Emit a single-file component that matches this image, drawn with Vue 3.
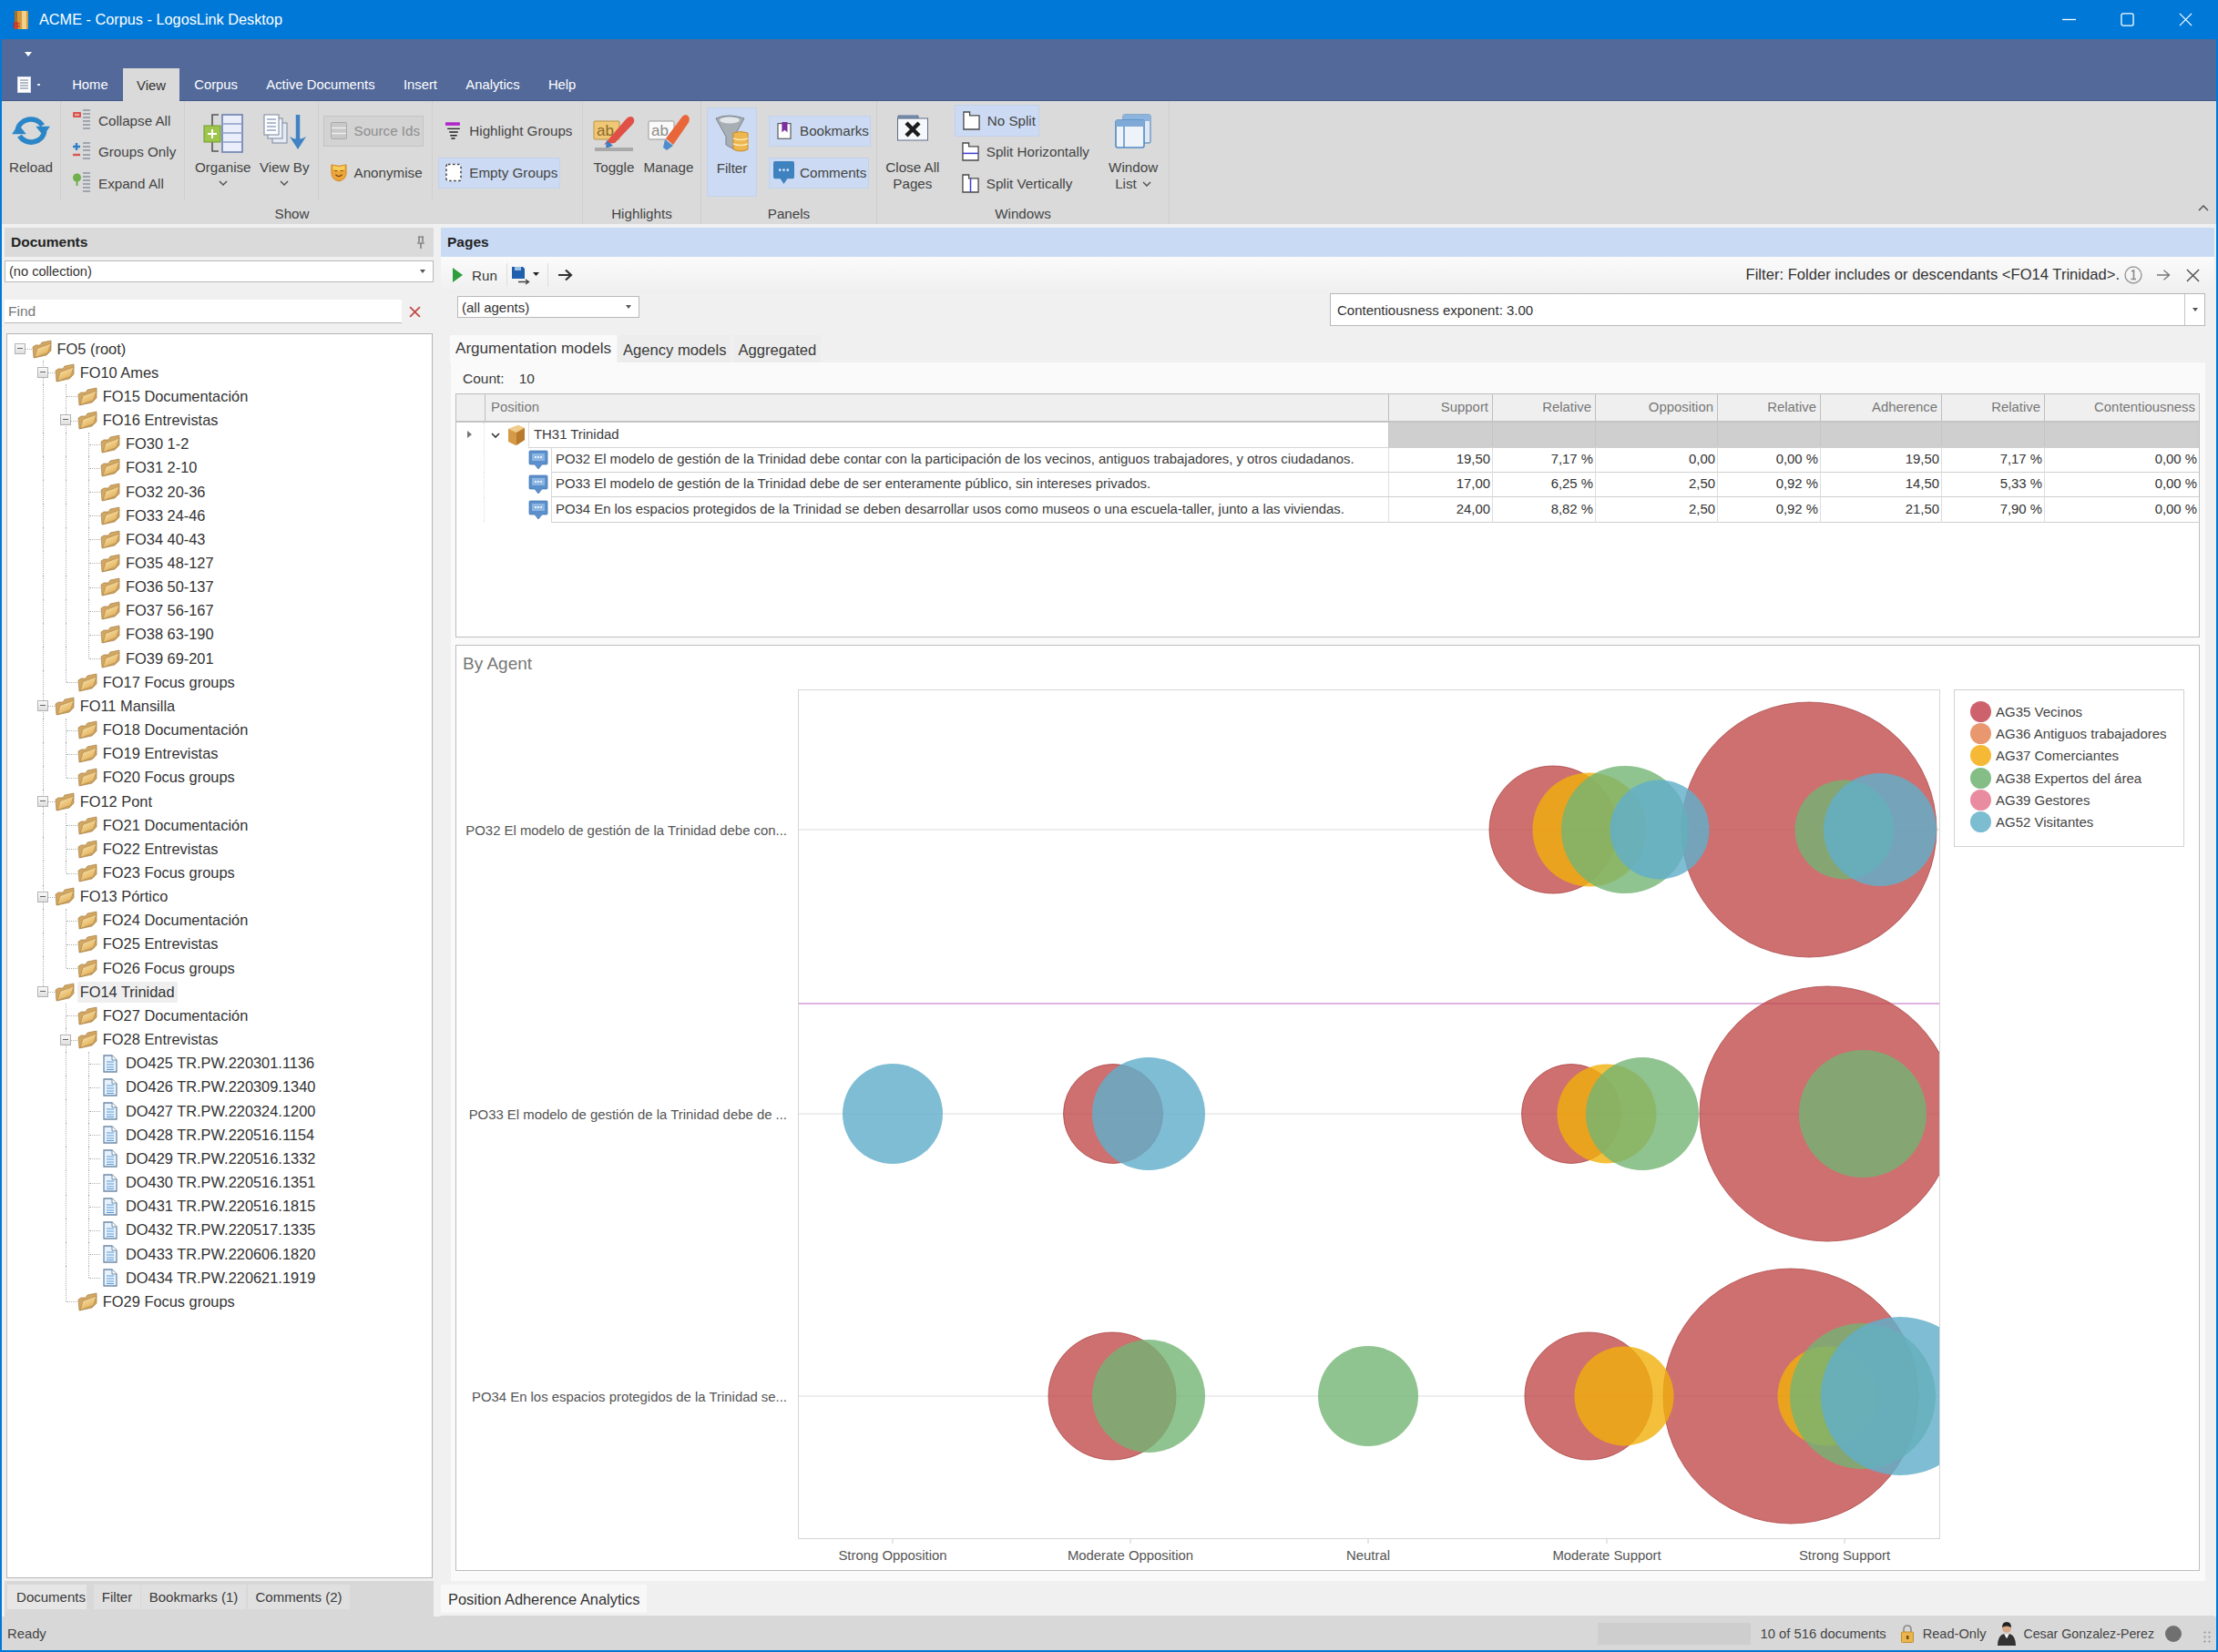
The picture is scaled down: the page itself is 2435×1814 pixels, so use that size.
<template>
  <div class="app">
    <svg class="sprite" aria-hidden="true">
      <defs>
        <linearGradient id="folderFront" x1="0" y1="0" x2="0.6" y2="1">
          <stop offset="0" stop-color="#fdeebb" />
          <stop offset="1" stop-color="#e0aa52" />
        </linearGradient>
        <symbol id="folder" viewBox="0 0 22 21">
          <path d="M2 20 L1 8 L4 6 L9 6 L11 3 L21 1 L21 12 L16 17 Z" fill="#d2a764" stroke="#a67f43" stroke-width=".7" />
          <path d="M3 19.6 L6 9.5 L21 4 L17.5 14.5 Z" fill="url(#folderFront)" stroke="#b08a4c" stroke-width=".7" />
        </symbol>
        <symbol id="doc" viewBox="0 0 16 20">
          <path d="M1 1 H10 L15 6 V19 H1 Z" fill="#e6f1fb" stroke="#6f8ba6" stroke-width="1.3" />
          <path d="M10 1 V6 H15" fill="#fff" stroke="#6f8ba6" />
          <path d="M4 8 H12 M4 11 H12 M4 14 H12 M4 16.5 H12" stroke="#5a9bd8" stroke-width="1.2" />
        </symbol>
        <symbol id="bubble" viewBox="0 0 22 22">
          <path d="M2 1 H20 Q21 1 21 2 V15 Q21 16 20 16 H15 L11 21 L7 16 H2 Q1 16 1 15 V2 Q1 1 2 1 Z" fill="#5b90cc" stroke="#4174ad" stroke-width=".7" />
          <rect x="4" y="4" width="14" height="8" fill="#8db6e2" />
          <path d="M7 8 H15" stroke="#e7f1fb" stroke-width="2" stroke-dasharray="2 1" />
        </symbol>
        <symbol id="tabpage" viewBox="0 0 20 22">
          <path d="M1 21 V1 H8 V5 H19 V21 Z" fill="#fff" stroke="#4a4a4a" stroke-width="1.4" />
        </symbol>
      </defs>
    </svg>

    <header class="titlebar">
      <svg class="app-icon" viewBox="0 0 18 22">
        <rect x="2" y="1" width="15" height="20" rx="1" fill="#d49a3f" />
        <rect x="10" y="1" width="5" height="20" fill="#f2d08a" />
        <rect x="2" y="1" width="3" height="20" fill="#a86f25" />
        <path d="M0 15 H8 M0 18 H8 M2 13 V21 M5 13 V21" stroke="#d4262a" stroke-width="1.2" />
      </svg>
      <span class="title-text">ACME - Corpus - LogosLink Desktop</span>
      <div class="win-btns">
        <svg viewBox="0 0 16 16"><path d="M0 8 H16" stroke="#fff" stroke-width="1.4" /></svg>
        <svg viewBox="0 0 16 16"><rect x="1" y="1" width="14" height="14" rx="2" fill="none" stroke="#fff" stroke-width="1.4" /></svg>
        <svg viewBox="0 0 16 16"><path d="M1 1 L15 15 M15 1 L1 15" stroke="#fff" stroke-width="1.3" /></svg>
      </div>
    </header>

    <nav class="menuband">
      <div class="qat"><span class="qat-arrow"></span></div>
      <div class="menutabs">
        <span class="appmenu">
          <svg viewBox="0 0 17 18">
            <rect x="0.5" y="0.5" width="14" height="17" fill="#fff" stroke="#d8dee9" />
            <path d="M3 4 H12 M3 7 H12 M3 10 H12 M3 13 H12" stroke="#6b7a96" stroke-width="1.2" />
          </svg>
          <i></i>
        </span>
        <span v-for="t in menuTabs" :key="t" class="menutab" :class="{ active: t === 'View' }">{{ t }}</span>
      </div>
    </nav>

    <div class="ribbon">
      <section class="rgroup" :style="{ width: '638px' }">
        <div class="rbody">
          <div class="sub sub-reload">
            <div class="big">
              <span class="bigicon">
                <svg width="44" height="36" viewBox="0 0 42 34">
                  <path d="M7 17 A14 13 0 0 1 33 12" fill="none" stroke="#2b86c8" stroke-width="5.4" />
                  <path d="M26 13 H41 L34 23 Z" fill="#2b86c8" />
                  <path d="M35 18 A14 13 0 0 1 9 23" fill="none" stroke="#2b86c8" stroke-width="5.4" />
                  <path d="M1 21 H16 L8 11 Z" fill="#2b86c8" />
                </svg>
              </span>
              <span class="lbl">Reload</span>
            </div>
          </div>
          <div class="sub sub-tree stack3">
            <div class="small">
              <svg viewBox="0 0 20 24"><rect x="0" y="3" width="9" height="6" rx="1" fill="#d9534f" /><path d="M2 6 H7" stroke="#fff" /><path d="M11 1 H19 M11 5 H19 M11 9 H19 M11 13 H19 M11 17 H19 M11 21 H19" stroke="#8a94a0" stroke-width="1.6" /></svg>
              <span>Collapse All</span>
            </div>
            <div class="small">
              <svg viewBox="0 0 20 24"><path d="M4 2 V10 M0 6 H8" stroke="#2f80c9" stroke-width="2.4" /><path d="M0 15 H8" stroke="#d9534f" stroke-width="2.4" /><path d="M11 2 H19 M11 6 H19 M11 10 H19 M11 15 H19 M11 19 H19" stroke="#8a94a0" stroke-width="1.6" /></svg>
              <span>Groups Only</span>
            </div>
            <div class="small">
              <svg viewBox="0 0 20 24"><circle cx="4.5" cy="6" r="4.5" fill="#6fb04a" /><path d="M4.5 9 V15" stroke="#6fb04a" stroke-width="2" /><path d="M11 1 H19 M11 5 H19 M11 9 H19 M11 13 H19 M11 17 H19 M11 21 H19" stroke="#8a94a0" stroke-width="1.6" /></svg>
              <span>Expand All</span>
            </div>
          </div>
          <div class="sub sub-views">
            <div class="big w-organise">
              <span class="bigicon">
                <svg width="44" height="44" viewBox="0 0 44 44">
                  <path d="M17 1 H10 V41 H17" fill="none" stroke="#555" stroke-width="1.6" />
                  <rect x="21" y="1" width="22" height="41" fill="#e9eefa" stroke="#6a7fb0" stroke-width="1.6" />
                  <path d="M21 11 H43 M21 21 H43 M21 31 H43" stroke="#8d9ec6" stroke-width="1.4" />
                  <rect x="1" y="13" width="18" height="18" fill="#9fc64c" stroke="#6f9a2c" />
                  <path d="M10 17 V27 M5 22 H15" stroke="#fff" stroke-width="2" />
                </svg>
              </span>
              <span class="lbl">Organise</span>
              <svg class="chev" viewBox="0 0 10 6"><path d="M1 1 L5 5 L9 1" fill="none" stroke="#555" stroke-width="1.5" /></svg>
            </div>
            <div class="big w-viewby">
              <span class="bigicon">
                <svg width="47" height="40" viewBox="0 0 47 40">
                  <rect x="10" y="10" width="16" height="22" fill="#e5ebf5" stroke="#7a869a" />
                  <rect x="5" y="5" width="16" height="22" fill="#eef2f9" stroke="#7a869a" />
                  <rect x="1" y="1" width="16" height="22" fill="#fff" stroke="#7a869a" />
                  <path d="M4 6 H14 M4 10 H14 M4 14 H14 M4 18 H14" stroke="#5d7aa8" stroke-width="1.2" />
                  <path d="M38 1 V30" stroke="#3f83c4" stroke-width="4.5" />
                  <path d="M29 25 L38 39 L47 25 Q38 31 29 25 Z" fill="#3f83c4" />
                </svg>
              </span>
              <span class="lbl">View By</span>
              <svg class="chev" viewBox="0 0 10 6"><path d="M1 1 L5 5 L9 1" fill="none" stroke="#555" stroke-width="1.5" /></svg>
            </div>
          </div>
          <div class="sub sub-src stack2">
            <div class="rbtn disabled w-src">
              <svg viewBox="0 0 18 20"><rect x="0.5" y="1" width="17" height="18" rx="1" fill="#c8c8c8" stroke="#a9a9a9" /><path d="M1 7 H17 M1 13 H17" stroke="#eee" stroke-width="1.6" /></svg>
              <span>Source Ids</span>
            </div>
            <div class="rbtn w-src">
              <svg viewBox="0 0 20 23"><path d="M1 2 Q10 5 19 2 V12 Q19 20 10 22 Q1 20 1 12 Z" fill="#eea53a" stroke="#d08420" /><path d="M5 9 H8 M12 9 H15" stroke="#7a4b10" stroke-width="1.6" /><path d="M6 14 Q10 18 14 14" fill="none" stroke="#7a4b10" stroke-width="1.5" /><path d="M3 3 Q10 6 17 3 V8 Q10 10 3 8 Z" fill="#f7cf58" /></svg>
              <span>Anonymise</span>
            </div>
          </div>
          <div class="sub sub-hl stack2">
            <div class="rbtn w-hl">
              <svg viewBox="0 0 17 18"><path d="M0 2 H15" stroke="#b027c9" stroke-width="3.4" /><path d="M2 7 H15 M4 10.5 H13 M5 14 H12 M6 17 H10" stroke="#222" stroke-width="1.4" /></svg>
              <span>Highlight Groups</span>
            </div>
            <div class="rbtn on w-empty">
              <svg viewBox="0 0 18 20"><rect x="1" y="1" width="16" height="18" rx="2" fill="#fff" stroke="#444" stroke-width="1.5" stroke-dasharray="2.5 2.5" /></svg>
              <span>Empty Groups</span>
            </div>
          </div>
        </div>
        <div class="rlabel">Show</div>
      </section>

      <section class="rgroup" :style="{ width: '130px' }">
        <div class="rbody">
          <div class="big w-marker">
            <span class="bigicon">
              <svg width="46" height="42" viewBox="0 0 46 42">
                <rect x="1" y="8" width="28" height="20" rx="1" fill="#f0c776" stroke="#b99443" />
                <text x="4" y="24" class="ab">ab</text>
                <path d="M15 33 L12 34 L36 6 Q40 1 44 4 Q47 8 43 12 L24 32 Z" fill="#e05046" />
                <path d="M15 29 L22 35 L14 38 Z" fill="#3a7ec4" />
                <rect x="2" y="37" width="42" height="4" fill="#a9a9a9" />
              </svg>
            </span>
            <span class="lbl">Toggle</span>
          </div>
          <div class="big w-marker">
            <span class="bigicon">
              <svg width="46" height="42" viewBox="0 0 46 42">
                <rect x="1" y="8" width="28" height="20" rx="1" fill="#fafafa" stroke="#999" />
                <text x="4" y="24" class="ab grey">ab</text>
                <path d="M20 27 L38 3 Q42 -1 45 3 Q47 7 44 11 L28 34 Z" fill="#e8663a" />
                <path d="M19 28 L28 35 L21 40 L17 37 Z" fill="#4f8ccc" />
              </svg>
            </span>
            <span class="lbl">Manage</span>
          </div>
        </div>
        <div class="rlabel">Highlights</div>
      </section>

      <section class="rgroup" :style="{ width: '193px' }">
        <div class="rbody">
          <div class="big on filter-btn">
            <span class="bigicon">
              <svg width="38" height="42" viewBox="0 0 38 42">
                <path d="M1 4 Q14 -2 32 4 L21 24 V38 L12 33 V24 Z" fill="#a7aeb4" stroke="#7d858c" />
                <ellipse cx="16" cy="6" rx="11" ry="3.4" fill="#e3e7ea" />
                <path d="M20 20 Q28 17 36 20 V38 Q28 42 20 38 Z" fill="#eeb64e" stroke="#c48d2c" />
                <path d="M20 26 Q28 29 36 26 M20 32 Q28 35 36 32" fill="none" stroke="#fbe5ad" stroke-width="1.4" />
              </svg>
            </span>
            <span class="lbl">Filter</span>
          </div>
          <div class="sub-panels stack2">
            <div class="rbtn on w-bm">
              <svg viewBox="0 0 18 24"><rect x="1" y="3" width="16" height="19" fill="#fff" stroke="#555" stroke-width="1.3" /><path d="M6 1 H13 V14 L9.5 11 L6 14 Z" fill="#7d2fa0" /></svg>
              <span>Bookmarks</span>
            </div>
            <div class="rbtn on w-cm">
              <svg class="wide" viewBox="0 0 24 26"><path d="M2 0 H22 Q24 0 24 2 V18 Q24 20 22 20 H16 L12 26 L8 20 H2 Q0 20 0 18 V2 Q0 0 2 0 Z" fill="#3f82c0" /><circle cx="7.5" cy="10" r="1.4" fill="#d8e8f7" /><circle cx="12" cy="10" r="1.4" fill="#d8e8f7" /><circle cx="16.5" cy="10" r="1.4" fill="#d8e8f7" /></svg>
              <span>Comments</span>
            </div>
          </div>
        </div>
        <div class="rlabel">Panels</div>
      </section>

      <section class="rgroup" :style="{ width: '321px' }">
        <div class="rbody">
          <div class="big w-close">
            <span class="bigicon">
              <svg width="36" height="30" viewBox="0 0 36 30">
                <path d="M2 5 H24 V2 H2 Z" fill="#7f96b8" stroke="#5c7090" />
                <rect x="1.5" y="5" width="33" height="24" fill="#f6f8fb" stroke="#5f6f86" />
                <path d="M11 10 L25 24 M25 10 L11 24" stroke="#1c1c1c" stroke-width="4.4" />
              </svg>
            </span>
            <span class="lbl">Close All<br />Pages</span>
          </div>
          <div class="sub-split stack3">
            <div class="small split on">
              <svg viewBox="0 0 20 22"><use href="#tabpage" /></svg>
              <span>No Split</span>
            </div>
            <div class="small split">
              <svg viewBox="0 0 20 22"><use href="#tabpage" /><path d="M1 13 H19" stroke="#3f3fd0" stroke-width="1.6" /></svg>
              <span>Split Horizontally</span>
            </div>
            <div class="small split">
              <svg viewBox="0 0 20 22"><use href="#tabpage" /><path d="M10 5 V21" stroke="#3f3fd0" stroke-width="1.6" /></svg>
              <span>Split Vertically</span>
            </div>
          </div>
          <div class="big w-winlist">
            <span class="bigicon">
              <svg width="40" height="38" viewBox="0 0 40 38">
                <rect x="9" y="1" width="30" height="31" rx="2" fill="#dfe8f4" stroke="#6d9ac8" stroke-width="1.4" />
                <rect x="9" y="1" width="30" height="7" fill="#8db4dc" />
                <rect x="1" y="7" width="31" height="30" rx="2" fill="#eef3fa" stroke="#4f8ac4" stroke-width="1.6" />
                <rect x="1" y="7" width="31" height="7" fill="#7fa9d6" />
                <path d="M10 14 V37" stroke="#4f8ac4" stroke-width="1.4" />
              </svg>
            </span>
            <span class="lbl">Window<br />List <svg class="chev inline" viewBox="0 0 10 6"><path d="M1 1 L5 5 L9 1" fill="none" stroke="#555" stroke-width="1.5" /></svg></span>
          </div>
        </div>
        <div class="rlabel">Windows</div>
      </section>

      <div class="ribbon-rest">
        <svg viewBox="0 0 12 8"><path d="M1 7 L6 2 L11 7" fill="none" stroke="#555" stroke-width="1.5" /></svg>
      </div>
    </div>

    <main class="body">
      <aside class="left">
        <div class="dock-head">
          <b>Documents</b>
          <svg viewBox="0 0 12 14"><path d="M3 1 H9 M4 1 V7 M8 1 V7 M2 8 H10 M6 8 V14" stroke="#666" stroke-width="1.2" fill="none" /></svg>
        </div>
        <div class="combo doc-combo"><span>(no collection)</span><i class="caret"></i></div>
        <div class="find">
          <div class="find-box">Find</div>
          <svg viewBox="0 0 12 12"><path d="M1 1 L11 11 M11 1 L1 11" stroke="#c04a45" stroke-width="1.6" /></svg>
        </div>
        <div class="tree">
          <div v-for="r in rows" :key="r.name" class="trow">
            <span v-for="(on, i) in r.trail" :key="i" class="tcell" :class="{ line: on && i > 0 }"></span>
            <span class="tcell conn" :class="{ root: r.level === 0, last: r.last }">
              <span v-if="r.kids" class="exp"></span>
            </span>
            <span class="ticon">
              <svg v-if="r.doc" class="doc"><use href="#doc" /></svg>
              <svg v-else class="folder"><use href="#folder" /></svg>
            </span>
            <span class="tname" :class="{ sel: r.name === 'FO14 Trinidad' }">{{ r.name }}</span>
          </div>
        </div>
        <div class="dock-tabs">
          <span class="dtab active t1">Documents</span>
          <span class="dtab t2">Filter</span>
          <span class="dtab t3">Bookmarks (1)</span>
          <span class="dtab t4">Comments (2)</span>
        </div>
      </aside>

      <section class="right">
        <div class="pages-head"><b>Pages</b></div>
        <div class="toolbar">
          <svg class="run-ic" viewBox="0 0 11 16"><path d="M0 0 L11 8 L0 16 Z" fill="#2f9e3f" /></svg>
          <span class="run">Run</span>
          <i class="tsep"></i>
          <svg class="save-ic" viewBox="0 0 30 20">
            <path d="M0 0 H12 L14 2 V13 H0 Z" fill="#1f5fae" />
            <rect x="3" y="0" width="7" height="4" fill="#9fc0e6" />
            <path d="M7 16.5 H18 M15 14 L18.5 16.5 L15 19" fill="none" stroke="#444" stroke-width="1.3" />
            <path d="M23 6 H30 L26.5 10 Z" fill="#222" />
          </svg>
          <i class="tsep"></i>
          <svg class="go-ic" viewBox="0 0 16 14"><path d="M0 7 H13 M8 1.5 L14 7 L8 12.5" fill="none" stroke="#333" stroke-width="2.2" /></svg>
          <span class="filter-text">Filter: Folder includes or descendants &lt;FO14 Trinidad&gt;.</span>
          <svg class="info" viewBox="0 0 20 20"><circle cx="10" cy="10" r="9" fill="none" stroke="#999" stroke-width="1.4" /><path d="M8 6 L10.5 5 V14 M7.5 14.5 H13" fill="none" stroke="#888" stroke-width="1.6" /></svg>
          <svg class="side" viewBox="0 0 16 14"><path d="M0 7 H14 M8 1.5 L14.5 7 L8 12.5" fill="none" stroke="#777" stroke-width="1.4" /></svg>
          <svg class="side close" viewBox="0 0 16 16"><path d="M1 1 L15 15 M15 1 L1 15" stroke="#555" stroke-width="1.6" /></svg>
        </div>
        <div class="opts">
          <div class="combo agents"><span>(all agents)</span><i class="caret"></i></div>
          <div class="combo expo"><span>Contentiousness exponent: 3.00</span><b><i class="caret"></i></b></div>
        </div>
        <div class="tabs">
          <span class="tab active">Argumentation models</span>
          <span class="tab">Agency models</span>
          <span class="tab">Aggregated</span>
        </div>
        <div class="content">
          <div class="count"><span>Count:</span><span>10</span></div>
          <div class="grid">
            <div class="grow ghead">
              <span></span>
              <span class="pos">Position</span>
              <span v-for="c in columns" :key="c.k">{{ c.label }}</span>
            </div>
            <div class="grow gtheme">
              <span class="ind"><i></i></span>
              <span class="pos">
                <svg class="tchev" viewBox="0 0 10 6"><path d="M1 1 L5 5 L9 1" fill="none" stroke="#333" stroke-width="1.6" /></svg>
                <svg class="box" viewBox="0 0 20 24">
                  <path d="M1 5 L12 1 L19 4 V17 L9 23 L1 19 Z" fill="#d59a47" />
                  <path d="M1 5 L10 9 L19 4 L12 1 Z" fill="#f0cd8d" />
                  <path d="M10 9 V23 L19 17 V4 Z" fill="#b97a2e" />
                </svg>
                <em>TH31 Trinidad</em>
              </span>
              <span v-for="c in columns" :key="c.k" class="band"></span>
            </div>
            <div v-for="p in positions" :key="p.id" class="grow gpos">
              <span class="ind"></span>
              <span class="pos">
                <svg class="bub"><use href="#bubble" /></svg>
                <em>{{ p.id }} {{ p.text }}</em>
              </span>
              <span v-for="(v, i) in p.vals" :key="i" class="num">{{ v }}</span>
            </div>
          </div>
          <div class="chart">
            <div class="chart-title">By Agent</div>
            <div class="chart-main">
              <svg class="plot" viewBox="0 0 1629 986" width="1629" height="986">
                <defs>
                  <clipPath id="plotClip"><rect x="375" y="17" width="1253" height="932" /></clipPath>
                </defs>
                <rect x="375.5" y="17.5" width="1253" height="932" fill="#fff" stroke="#d6d6d6" />
                <line v-for="l in bubbleRows" :key="l.y" x1="376" x2="1628" :y1="l.y - 740" :y2="l.y - 740" stroke="#dcdcdc" />
                <line x1="376" x2="1628" y1="362" y2="362" stroke="#d49ad4" stroke-width="1.4" />
                <line v-for="t in ticks" :key="t.label" :x1="t.x - 501" :x2="t.x - 501" y1="950" y2="955" stroke="#ccc" />
                <g clip-path="url(#plotClip)">
                  <circle v-for="(b, i) in bubbles" :key="i" :cx="b.x - 501" :cy="b.y - 740" :r="b.r" :fill="b.color" :stroke="b.color === RED ? 'rgba(165, 60, 60, 0.7)' : 'none'" />
                </g>
                <text v-for="l in bubbleRows" :key="l.label" x="363" :y="l.y - 734" text-anchor="end" class="axis">{{ l.label }}</text>
                <text v-for="t in ticks" :key="t.label" :x="t.x - 501" y="973" text-anchor="middle" class="axis">{{ t.label }}</text>
              </svg>
              <div class="legend">
                <div v-for="a in agents" :key="a.name" class="leg">
                  <i :style="{ background: a.swatch }"></i>
                  <span>{{ a.name }}</span>
                </div>
              </div>
            </div>
          </div>
        </div>
        <div class="page-tabs"><span>Position Adherence Analytics</span></div>
      </section>
    </main>

    <footer class="status">
      <span class="ready">Ready</span>
      <span class="stat-field"></span>
      <span class="stat-docs">10 of 516 documents</span>
      <svg class="lock" viewBox="0 0 14 20">
        <path d="M3 9 V5 Q3 1 7 1 Q11 1 11 5 V9" fill="none" stroke="#8a8a8a" stroke-width="1.6" />
        <rect x="0.5" y="8" width="13" height="11.5" rx="1" fill="#eab54c" stroke="#c48d2c" />
        <rect x="6" y="12" width="2.4" height="4" fill="#6b4a12" />
      </svg>
      <span class="stat-ro">Read-Only</span>
      <svg class="user" viewBox="0 0 20 26">
        <circle cx="10" cy="7" r="5" fill="#d8a988" />
        <path d="M5 6 Q5 0 10 0 Q15 0 15 6 Q10 3 5 6 Z" fill="#222" />
        <path d="M0 26 Q0 15 7 13 L10 18 L13 13 Q20 15 20 26 Z" fill="#333" />
        <path d="M8 14 L10 18 L12 14 Z" fill="#fff" />
      </svg>
      <span class="stat-user">Cesar Gonzalez-Perez</span>
      <i class="stat-dot"></i>
      <span class="grip"></span>
    </footer>
  </div>
</template>

<script setup>
const menuTabs = ['Home', 'View', 'Corpus', 'Active Documents', 'Insert', 'Analytics', 'Help']

const leafs = (names) => names.map((name) => ({ name }))
const docs = (names) => names.map((name) => ({ name, doc: true }))

const tree = [
  {
    name: 'FO5 (root)',
    kids: [
      {
        name: 'FO10 Ames',
        kids: [
          { name: 'FO15 Documentación' },
          {
            name: 'FO16 Entrevistas',
            kids: leafs(['FO30 1-2', 'FO31 2-10', 'FO32 20-36', 'FO33 24-46', 'FO34 40-43', 'FO35 48-127', 'FO36 50-137', 'FO37 56-167', 'FO38 63-190', 'FO39 69-201']),
          },
          { name: 'FO17 Focus groups' },
        ],
      },
      { name: 'FO11 Mansilla', kids: leafs(['FO18 Documentación', 'FO19 Entrevistas', 'FO20 Focus groups']) },
      { name: 'FO12 Pont', kids: leafs(['FO21 Documentación', 'FO22 Entrevistas', 'FO23 Focus groups']) },
      { name: 'FO13 Pórtico', kids: leafs(['FO24 Documentación', 'FO25 Entrevistas', 'FO26 Focus groups']) },
      {
        name: 'FO14 Trinidad',
        kids: [
          { name: 'FO27 Documentación' },
          {
            name: 'FO28 Entrevistas',
            kids: docs(['DO425 TR.PW.220301.1136', 'DO426 TR.PW.220309.1340', 'DO427 TR.PW.220324.1200', 'DO428 TR.PW.220516.1154', 'DO429 TR.PW.220516.1332', 'DO430 TR.PW.220516.1351', 'DO431 TR.PW.220516.1815', 'DO432 TR.PW.220517.1335', 'DO433 TR.PW.220606.1820', 'DO434 TR.PW.220621.1919']),
          },
          { name: 'FO29 Focus groups' },
        ],
      },
    ],
  },
]

// flatten the tree, each row keeps which ancestor levels still need a guide line
const flatten = (nodes, level, trail, out) => {
  nodes.forEach((n, i) => {
    const last = i === nodes.length - 1
    out.push({ name: n.name, doc: n.doc, kids: !!n.kids, level, last, trail })
    if (n.kids) flatten(n.kids, level + 1, [...trail, !last], out)
  })
  return out
}
const rows = flatten(tree, 0, [], [])

const columns = [
  { k: 'sup', label: 'Support' },
  { k: 'supr', label: 'Relative' },
  { k: 'opp', label: 'Opposition' },
  { k: 'oppr', label: 'Relative' },
  { k: 'adh', label: 'Adherence' },
  { k: 'adhr', label: 'Relative' },
  { k: 'con', label: 'Contentiousness' },
]

const positions = [
  {
    id: 'PO32',
    text: 'El modelo de gestión de la Trinidad debe contar con la participación de los vecinos, antiguos trabajadores, y otros ciudadanos.',
    vals: ['19,50', '7,17 %', '0,00', '0,00 %', '19,50', '7,17 %', '0,00 %'],
  },
  {
    id: 'PO33',
    text: 'El modelo de gestión de la Trinidad debe de ser enteramente público, sin intereses privados.',
    vals: ['17,00', '6,25 %', '2,50', '0,92 %', '14,50', '5,33 %', '0,00 %'],
  },
  {
    id: 'PO34',
    text: 'En los espacios protegidos de la Trinidad se deben desarrollar usos como museos o una escuela-taller, junto a las viviendas.',
    vals: ['24,00', '8,82 %', '2,50', '0,92 %', '21,50', '7,90 %', '0,00 %'],
  },
]

const agents = [
  { name: 'AG35 Vecinos', swatch: '#cd626c' },
  { name: 'AG36 Antiguos trabajadores', swatch: '#e9976f' },
  { name: 'AG37 Comerciantes', swatch: '#f5b935' },
  { name: 'AG38 Expertos del área', swatch: '#84bd86' },
  { name: 'AG39 Gestores', swatch: '#e98c9f' },
  { name: 'AG52 Visitantes', swatch: '#7cbdd2' },
]

const RED = 'rgba(192, 72, 72, 0.78)'
const YEL = 'rgba(241, 176, 11, 0.8)'
const GRN = 'rgba(115, 180, 115, 0.8)'
const BLU = 'rgba(98, 174, 203, 0.82)'

const bubbleRows = [
  { y: 911, label: 'PO32 El modelo de gestión de la Trinidad debe con...' },
  { y: 1223, label: 'PO33 El modelo de gestión de la Trinidad debe de ...' },
  { y: 1533, label: 'PO34 En los espacios protegidos de la Trinidad se...' },
]

const ticks = [
  { x: 980, label: 'Strong Opposition' },
  { x: 1241, label: 'Moderate Opposition' },
  { x: 1502, label: 'Neutral' },
  { x: 1764, label: 'Moderate Support' },
  { x: 2025, label: 'Strong Support' },
]

// drawn series by series: red first, blue last
const bubbles = [
  { x: 1705, y: 911, r: 70, color: RED },
  { x: 1986, y: 911, r: 140, color: RED },
  { x: 1222, y: 1223, r: 54.5, color: RED },
  { x: 1725, y: 1223, r: 54.5, color: RED },
  { x: 2006, y: 1223, r: 140, color: RED },
  { x: 1221, y: 1533, r: 70, color: RED },
  { x: 1744, y: 1533, r: 70, color: RED },
  { x: 1966, y: 1533, r: 140, color: RED },
  { x: 1745, y: 911, r: 62.5, color: YEL },
  { x: 1764, y: 1223, r: 54.5, color: YEL },
  { x: 1783, y: 1533, r: 54.5, color: YEL },
  { x: 2006, y: 1533, r: 54.5, color: YEL },
  { x: 1784, y: 911, r: 70, color: GRN },
  { x: 2025, y: 911, r: 54.5, color: GRN },
  { x: 1803, y: 1223, r: 62, color: GRN },
  { x: 2045, y: 1223, r: 70, color: GRN },
  { x: 1261, y: 1533, r: 62, color: GRN },
  { x: 1502, y: 1533, r: 55, color: GRN },
  { x: 2045, y: 1533, r: 80, color: GRN },
  { x: 1822, y: 911, r: 54.5, color: BLU },
  { x: 2064, y: 911, r: 62, color: BLU },
  { x: 980, y: 1223, r: 55, color: BLU },
  { x: 1261, y: 1223, r: 62, color: BLU },
  { x: 2086, y: 1533, r: 87, color: BLU },
]
</script>

<style scoped>
.app {
  width: 2435px;
  height: 1814px;
  box-sizing: border-box;
  display: flex;
  flex-direction: column;
  overflow: hidden;
  border: solid #0078d7;
  border-width: 0 2px 2px;
  background: #f0f0f0;
  font-family: "Liberation Sans", Arial, sans-serif;
  color: #3a3a3a;
}
.sprite {
  width: 0;
  height: 0;
  position: absolute;
}

/* title bar */
.titlebar {
  flex: 0 0 43px;
  display: flex;
  align-items: center;
  background: #0078d7;
  color: #fff;
  padding-left: 12px;
}
.app-icon {
  width: 18px;
  height: 22px;
}
.title-text {
  margin-left: 11px;
  font-size: 16.3px;
}
.win-btns {
  margin-left: auto;
  display: flex;
  align-items: center;
  gap: 49px;
  padding-right: 26px;
}
.win-btns svg {
  width: 15px;
  height: 15px;
}

/* blue-grey menu band */
.menuband {
  flex: 0 0 68px;
  display: flex;
  flex-direction: column;
  background: #52699a;
  color: #fff;
}
.qat {
  height: 32px;
  display: flex;
  align-items: center;
  padding-left: 25px;
}
.qat-arrow {
  border: 4px solid transparent;
  border-top: 5px solid #fff;
  border-bottom: 0;
}
.menutabs {
  height: 36px;
  display: flex;
  align-items: stretch;
  gap: 1px;
  border-bottom: 1px solid #46598a;
  box-sizing: border-box;
}
.appmenu {
  width: 44px;
  padding: 0 0 0 17px;
  display: flex;
  align-items: center;
  gap: 5px;
}
.appmenu svg {
  width: 17px;
  height: 18px;
}
.appmenu i {
  width: 3px;
  height: 2px;
  background: #e4e8f0;
}
.menutab {
  padding: 1px 15.2px 0;
  display: flex;
  align-items: center;
  font-size: 14.8px;
}
.menutab.active {
  background: #dadada;
  color: #333;
  margin-bottom: -1px;
}

/* ribbon */
.ribbon {
  flex: 0 0 135px;
  display: flex;
  background: #dadada;
  font-size: 15.2px;
  color: #444;
}
.rgroup {
  display: flex;
  flex-direction: column;
  border-right: 1px solid #cfcfcf;
  box-sizing: border-box;
}
.rbody {
  flex: 0 0 113px;
  display: flex;
}
.rlabel {
  flex: 1;
  text-align: center;
  line-height: 22px;
}
.sub {
  border-right: 1px solid #cfcfcf;
  box-sizing: border-box;
  margin-bottom: 4px;
}
.sub:last-child {
  border-right: 0;
}
.sub-reload {
  width: 65px;
  display: flex;
}
.sub-reload .big {
  width: 64px;
}
.sub-tree {
  width: 136px;
}
.sub-views {
  width: 147px;
  display: flex;
  padding-left: 6px;
}
.sub-src {
  width: 126px;
}
.sub-hl {
  width: 164px;
}
.big {
  display: flex;
  flex-direction: column;
  align-items: center;
  padding-top: 14px;
  box-sizing: border-box;
}
.bigicon {
  height: 50px;
  display: flex;
  align-items: flex-start;
  justify-content: center;
}
.lbl {
  text-align: center;
  line-height: 18px;
}
.chev {
  width: 10px;
  height: 6px;
  margin-top: 5px;
}
.chev.inline {
  margin: 0 0 2px 2px;
}
.w-organise {
  width: 72px;
}
.w-viewby {
  width: 63px;
}
.stack3 {
  padding-top: 4px;
}
.small {
  height: 34.5px;
  display: flex;
  align-items: center;
  gap: 8px;
  padding-left: 13px;
}
.small svg {
  width: 20px;
  height: 24px;
}
.stack2 {
  display: flex;
  flex-direction: column;
  gap: 12px;
  padding-top: 16px;
}
.rbtn {
  height: 34px;
  display: flex;
  align-items: center;
  gap: 8px;
  padding: 0 0 2px 7px;
  box-sizing: border-box;
  border: 1px solid transparent;
}
.rbtn svg {
  width: 18px;
  height: 21px;
  flex: none;
}
.rbtn svg.wide {
  width: 23px;
  height: 25px;
}
.on {
  background: #ccdbf3;
  border: 1px solid #c3d2ea;
}
.rbtn.disabled {
  background: #d3d3d3;
  border-color: #c4c4c4;
  color: #8e8e8e;
}
.w-src {
  width: 110px;
  margin-left: 5px;
}
.w-hl {
  width: 150px;
  margin-left: 6px;
}
.w-empty {
  width: 134px;
  margin-left: 6px;
}
.w-marker {
  width: 60px;
}
.w-marker:first-child {
  margin-left: 4px;
}
.ab {
  font-size: 17px;
  fill: #8a6a2a;
}
.ab.grey {
  fill: #8c8c8c;
}
.filter-btn {
  width: 55px;
  height: 98px;
  margin: 7px 0 0 6px;
  padding-top: 7px;
}
.filter-btn .bigicon {
  height: 50px;
}
.sub-panels {
  margin-left: 13px;
}
.w-bm {
  width: 112px;
}
.w-cm {
  width: 110px;
  padding-left: 4px;
  gap: 6px;
}
.w-close {
  width: 78px;
}
.sub-split {
  width: 165px;
  padding-left: 0;
}
.split {
  margin-left: 7px;
  padding-left: 8px;
  width: 155px;
  white-space: nowrap;
  box-sizing: border-box;
}
.split.on {
  width: 93px;
}
.split svg {
  width: 19px;
  height: 21px;
}
.w-winlist {
  width: 78px;
}
.ribbon-rest {
  flex: 1;
  display: flex;
  justify-content: flex-end;
  align-items: flex-end;
  padding: 0 8px 14px 0;
}
.ribbon-rest svg {
  width: 12px;
  height: 8px;
}

/* main split */
.body {
  flex: 1;
  min-height: 0;
  display: flex;
  gap: 8px;
  padding: 4px 2px 0 3px;
}
.left {
  width: 471px;
  display: flex;
  flex-direction: column;
}
.dock-head {
  height: 32px;
  flex: none;
  display: flex;
  align-items: center;
  justify-content: space-between;
  padding: 0 8px 0 7px;
  background: #dadada;
  font-size: 15.5px;
  color: #222;
}
.dock-head svg {
  width: 12px;
  height: 14px;
}
.combo {
  display: flex;
  align-items: center;
  justify-content: space-between;
  background: #fff;
  box-sizing: border-box;
  border: 1px solid #b9b9b9;
  font-size: 15px;
  color: #333;
  padding: 0 8px 0 4px;
}
.caret {
  border: 3.5px solid transparent;
  border-top: 4px solid #555;
  border-bottom: 0;
}
.doc-combo {
  height: 24px;
  margin-top: 4px;
  font-size: 14.6px;
}
.find {
  flex: none;
  margin-top: 19px;
  display: flex;
  align-items: center;
  gap: 8px;
}
.find-box {
  width: 436px;
  height: 26px;
  box-sizing: border-box;
  background: #fff;
  border-bottom: 1px solid #bbb;
  padding: 4px 0 0 4px;
  font-size: 15.5px;
  color: #777;
}
.find svg {
  width: 13px;
  height: 13px;
}
.tree {
  flex: 1;
  margin: 11px 1px 3px 2px;
  background: #fff;
  border: 1px solid #b5b5b5;
  padding: 3px 0 0 1.4px;
  min-height: 0;
}
.trow {
  height: 26.17px;
  display: flex;
  align-items: center;
  font-size: 16.4px;
  color: #333;
}
.tcell {
  flex: 0 0 25.17px;
  align-self: stretch;
  position: relative;
}
.tcell.line::before,
.conn::before {
  content: "";
  position: absolute;
  left: 12.5px;
  top: 0;
  bottom: 0;
  border-left: 1px dotted #b0b0b0;
}
.conn.last::before {
  bottom: 50%;
}
.conn::after {
  content: "";
  position: absolute;
  left: 13px;
  right: 0;
  top: 50%;
  border-top: 1px dotted #b0b0b0;
}
.conn.root::before {
  display: none;
}
.exp {
  position: absolute;
  left: 6.5px;
  top: 7px;
  width: 12px;
  height: 12px;
  box-sizing: border-box;
  border: 1px solid #b2b2b2;
  background: linear-gradient(#fafafa, #dedede);
  z-index: 1;
}
.exp::after {
  content: "";
  position: absolute;
  left: 2px;
  right: 2px;
  top: 4px;
  border-top: 1px solid #666;
}
.ticon {
  flex: 0 0 22px;
  display: flex;
  justify-content: center;
}
.folder {
  width: 22px;
  height: 21px;
}
.doc {
  width: 16px;
  height: 20px;
}
.tname {
  margin-left: 3px;
  padding: 3px;
  line-height: 17px;
  white-space: nowrap;
}
.tname.sel {
  background: #efefef;
  border-radius: 2px;
}
.dock-tabs {
  flex: none;
  height: 39px;
  display: flex;
  align-items: flex-start;
  background: #d8d8d8;
  font-size: 15px;
  padding-top: 4px;
  box-sizing: border-box;
}
.dtab {
  height: 27px;
  display: flex;
  align-items: center;
  justify-content: center;
  background: #e0e0e0;
  box-sizing: border-box;
}
.dtab.active {
  background: #e6e6e6;
}
.t1 {
  width: 87px;
  margin-left: 3px;
  padding-left: 9px;
}
.t2 {
  width: 51px;
  margin-left: 8px;
}
.t3 {
  width: 115px;
  margin-left: 1px;
}
.t4 {
  width: 112px;
  margin-left: 2px;
}

/* right side */
.right {
  flex: 1;
  min-width: 0;
  display: flex;
  flex-direction: column;
}
.pages-head {
  height: 32px;
  flex: none;
  display: flex;
  align-items: center;
  padding-left: 7px;
  background: #c9daf5;
  font-size: 15.5px;
  color: #222;
}
.toolbar {
  height: 40px;
  flex: none;
  display: flex;
  align-items: center;
  padding-left: 13px;
  background: linear-gradient(#fbfbfb, #efefef);
  font-size: 15.2px;
}
.run-ic {
  width: 11px;
  height: 16px;
}
.run {
  margin-left: 10px;
}
.tsep {
  width: 1px;
  height: 26px;
  margin-left: 10px;
  background: #dedede;
}
.save-ic {
  width: 30px;
  height: 20px;
  margin: 2px 0 0 5px;
}
.save-ic + .tsep {
  margin-left: 9px;
}
.go-ic {
  width: 16px;
  height: 14px;
  margin-left: 11px;
}
.filter-text {
  margin-left: auto;
  white-space: nowrap;
  color: #333;
  font-size: 16.6px;
}
.info {
  width: 20px;
  height: 20px;
  margin-left: 5px;
}
.side {
  width: 15px;
  height: 14px;
  margin-left: 16px;
}
.side.close {
  margin: 0 16px 0 17px;
  height: 15px;
}
.opts {
  height: 46px;
  flex: none;
  display: flex;
  align-items: flex-start;
  justify-content: space-between;
  padding: 0 10px 0 18px;
}
.agents {
  width: 200px;
  height: 24px;
  margin-top: 3px;
}
.expo {
  width: 961px;
  height: 36px;
  padding: 0 0 0 7px;
}
.expo b {
  width: 21px;
  height: 100%;
  display: flex;
  align-items: center;
  justify-content: center;
  border-left: 1px solid #c5c5c5;
}
.tabs {
  height: 30px;
  flex: none;
  display: flex;
  margin-left: 10px;
  font-size: 16.6px;
}
.tab {
  display: flex;
  align-items: center;
  padding: 4px 5px 0;
  margin-right: 3px;
  background: #ededed;
}
.tab.active {
  background: #fafafa;
  padding: 0 6px;
  margin-right: 2px;
  font-size: 17.1px;
}
.content {
  height: 1338px;
  flex: none;
  box-sizing: border-box;
  margin: 0 10px 0 11px;
  padding: 0 5px;
  background: #fafafa;
  width: 1926px;
}
.count {
  height: 34px;
  display: flex;
  align-items: center;
  gap: 16px;
  padding: 2px 0 0 8px;
  box-sizing: border-box;
  font-size: 15.5px;
}
.grid {
  height: 268px;
  width: 1915px;
  box-sizing: border-box;
  background: #fff;
  border: 1px solid #bdbdbd;
  font-size: 14.9px;
}
.grow {
  display: grid;
  grid-template-columns: 31px 992px 114px 113px 134px 113px 133px 113px 170px;
}
.ghead {
  height: 29px;
  background: #efefef;
  border-bottom: 2px solid #c4c4c4;
  box-sizing: content-box;
  color: #777;
  line-height: 29px;
}
.ghead span {
  border-left: 1px solid #bebebe;
  text-align: right;
  padding-right: 4px;
}
.ghead span:first-child {
  border-left: 0;
}
.ghead .pos {
  text-align: left;
  padding-left: 6px;
}
.gtheme,
.gpos {
  height: 27.2px;
  line-height: 27px;
}
.ind {
  position: relative;
  border-right: 1px dotted #ddd;
}
.ind i {
  position: absolute;
  left: 12px;
  top: 9px;
  border: 4.5px solid transparent;
  border-left: 5px solid #777;
  border-right: 0;
}
.pos {
  display: flex;
  align-items: center;
}
.pos em {
  font-style: normal;
  color: #3c3c3c;
  white-space: nowrap;
}
.gtheme .pos {
  padding-left: 7px;
}
.tchev {
  width: 10px;
  height: 6px;
}
.box {
  width: 20px;
  height: 24px;
  margin-left: 8px;
}
.gtheme em {
  flex: 1;
  margin-left: 3px;
  padding-left: 5px;
  border-left: 1px solid #ddd;
  border-bottom: 1px solid #d4d4d4;
  align-self: stretch;
}
.band {
  background: #cfcfcf;
  border-left: 1px solid #c6c6c6;
}
.gpos .pos {
  padding-left: 48px;
}
.bub {
  width: 22px;
  height: 22px;
  flex: none;
}
.gpos em {
  flex: 1;
  align-self: stretch;
  margin-left: 3px;
  padding-left: 4px;
  border-left: 1px solid #d8d8d8;
  border-bottom: 1px solid #cfcfcf;
}
.num {
  text-align: right;
  padding-right: 2px;
  border-left: 1px solid #dedede;
  border-bottom: 1px solid #cfcfcf;
  color: #333;
}
.chart {
  margin-top: 8px;
  height: 1017px;
  width: 1915px;
  box-sizing: border-box;
  background: #fff;
  border: 1px solid #bdbdbd;
}
.chart-title {
  height: 31px;
  line-height: 39px;
  padding-left: 7px;
  font-size: 19px;
  color: #777;
}
.chart-main {
  display: flex;
  align-items: flex-start;
}
.plot {
  flex: none;
}
.axis {
  font-size: 14.9px;
  fill: #555;
  font-family: "Liberation Sans", Arial, sans-serif;
}
.legend {
  width: 253px;
  height: 173px;
  box-sizing: border-box;
  margin: 17px 0 0 15px;
  padding: 11px 0 0 17px;
  border: 1px solid #d2d2d2;
  font-size: 15px;
  color: #444;
}
.leg {
  height: 24.3px;
  display: flex;
  align-items: center;
  gap: 5px;
}
.leg i {
  width: 23px;
  height: 23px;
  border-radius: 50%;
}
.page-tabs {
  flex: 1;
  display: flex;
  align-items: stretch;
  padding-bottom: 3px;
  font-size: 16.4px;
  border-bottom: 1px solid #d8d8d8;
}
.page-tabs span {
  width: 226px;
  margin-top: 4px;
  display: flex;
  align-items: center;
  padding: 2px 0 0 8px;
  background: #f8f8f8;
  color: #333;
  box-sizing: border-box;
}

/* status bar */
.status {
  flex: 0 0 37px;
  display: flex;
  align-items: center;
  background: #d8d8d8;
  font-size: 14.8px;
  color: #444;
  padding-left: 6px;
}
.ready {
  color: #444;
}
.stat-field {
  width: 168px;
  height: 24px;
  margin-left: auto;
  background: #cecece;
}
.stat-docs {
  margin-left: 11px;
}
.lock {
  width: 14px;
  height: 20px;
  margin-left: 16px;
}
.stat-ro {
  margin-left: 10px;
  font-size: 14.6px;
}
.user {
  width: 20px;
  height: 26px;
  margin-left: 13px;
}
.stat-user {
  margin-left: 8px;
  font-size: 14.2px;
}
.stat-dot {
  width: 18px;
  height: 18px;
  border-radius: 50%;
  background: #707070;
  margin-left: 12px;
}
.grip {
  width: 10px;
  height: 14px;
  margin: 6px 5px 0 23px;
  background-image: radial-gradient(circle, #aaa 1px, transparent 1.2px);
  background-size: 5px 5px;
}
</style>

<style>
html,
body {
  background: #f0f0f0;
}
</style>
